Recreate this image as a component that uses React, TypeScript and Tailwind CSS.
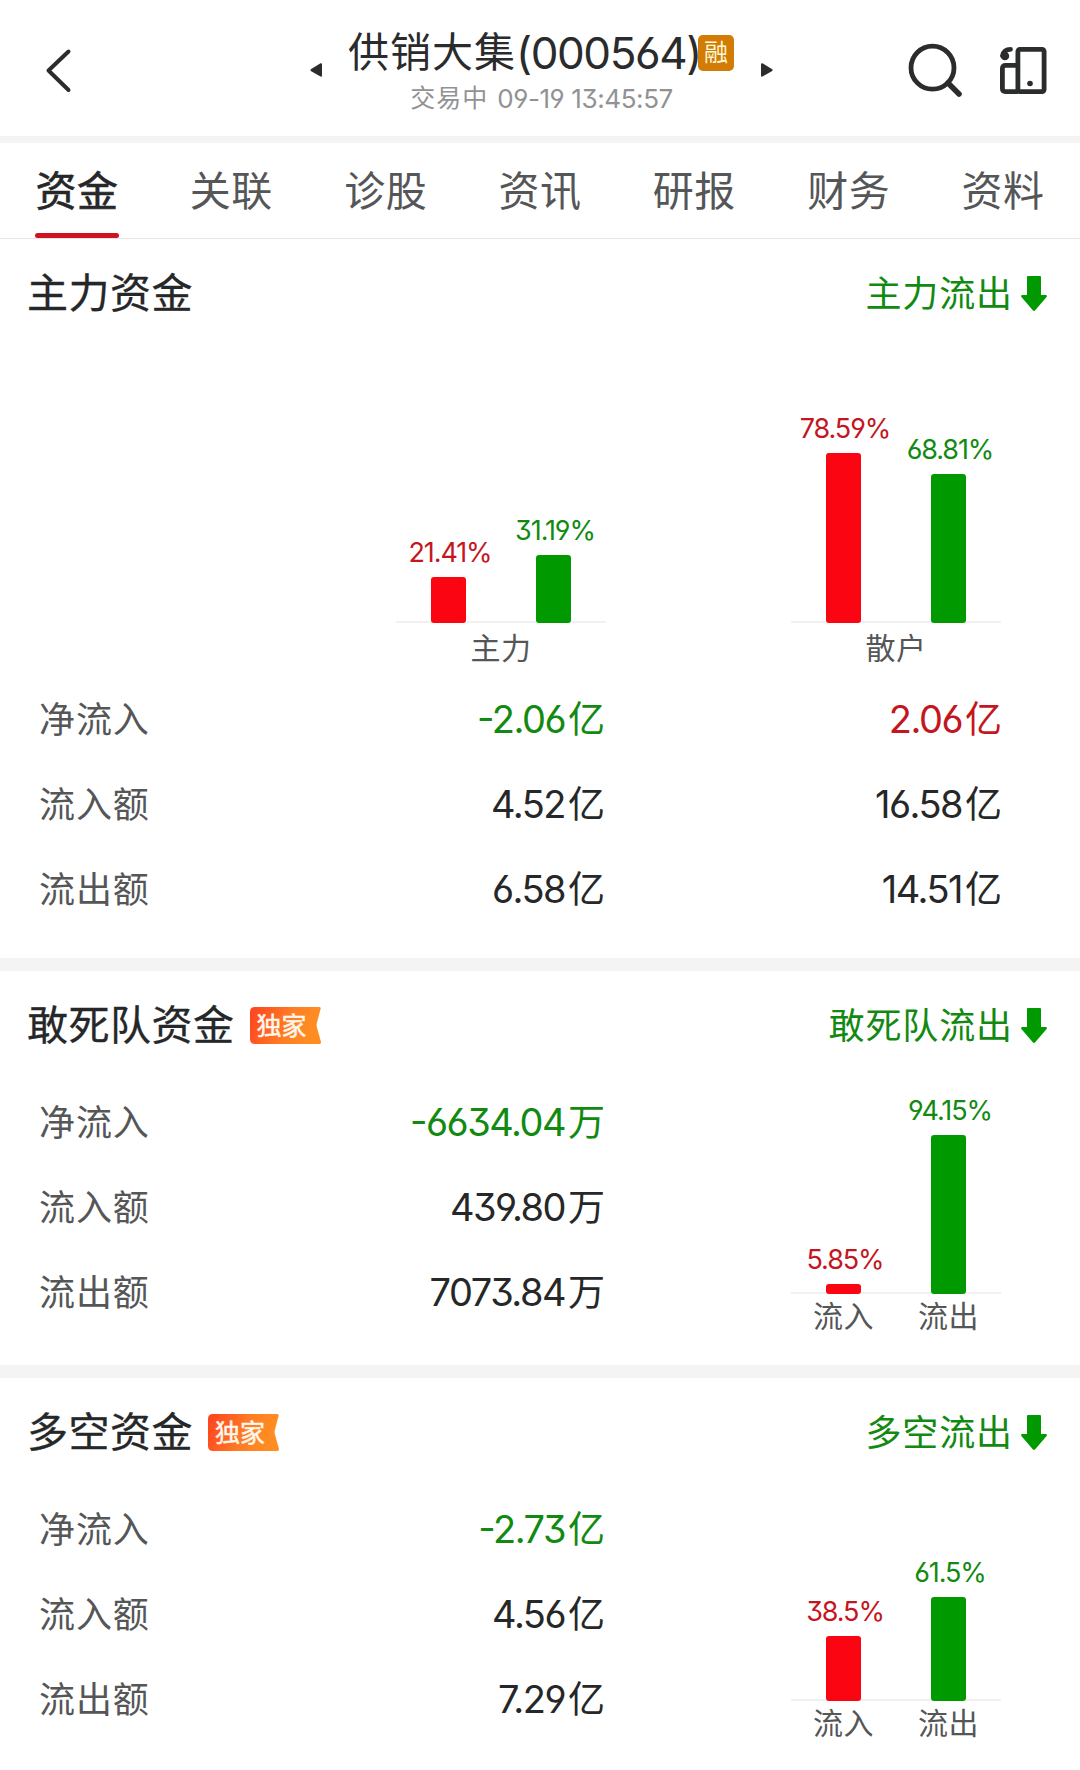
import React, { useState } from 'react';
import clsx from 'clsx';

type Tone = 'up' | 'down' | 'plain';

interface Bar {
  percent: string;
  height: number;
  tone: 'up' | 'down';
  label?: string;
}

interface Amount {
  value: string;
  unit: string;
  tone?: Tone;
}

interface FundRow {
  label: string;
  amounts: Amount[];
}

const tabs = ['资金', '关联', '诊股', '资讯', '研报', '财务', '资料'];

const mainRows: FundRow[] = [
  { label: '净流入', amounts: [{ value: '-2.06', unit: '亿', tone: 'down' }, { value: '2.06', unit: '亿', tone: 'up' }] },
  { label: '流入额', amounts: [{ value: '4.52', unit: '亿' }, { value: '16.58', unit: '亿' }] },
  { label: '流出额', amounts: [{ value: '6.58', unit: '亿' }, { value: '14.51', unit: '亿' }] },
];

const squadRows: FundRow[] = [
  { label: '净流入', amounts: [{ value: '-6634.04', unit: '万', tone: 'down' }] },
  { label: '流入额', amounts: [{ value: '439.80', unit: '万' }] },
  { label: '流出额', amounts: [{ value: '7073.84', unit: '万' }] },
];

const longShortRows: FundRow[] = [
  { label: '净流入', amounts: [{ value: '-2.73', unit: '亿', tone: 'down' }] },
  { label: '流入额', amounts: [{ value: '4.56', unit: '亿' }] },
  { label: '流出额', amounts: [{ value: '7.29', unit: '亿' }] },
];

const toneClass: Record<Tone, string> = {
  up: 'text-[#c4161f]',
  down: 'text-[#128a12]',
  plain: 'text-[#262728]',
};

const Header = () => (
  <header className="flex h-[136px] items-start justify-between">
    <svg className="ml-[40px] mt-[44px] h-[54px] w-[40px]" viewBox="0 0 40 54" fill="none" stroke="#2b2c2d" strokeWidth="4" strokeLinecap="round" strokeLinejoin="round">
      <path d="M28.5 7.5 8.5 26.5l20 19.5" />
    </svg>
    <div className="ml-[97px] flex items-start">
      <svg className="mr-[26px] mt-[63px] h-[14px] w-[12px]" viewBox="0 0 12 14" fill="#2b2c2d">
        <path d="M10.5.3Q12 0 12 1.5v11q0 1.5-1.5 1.1L.8 7.9Q0 7 .8 6.300z" />
      </svg>
      <div className="flex w-[387px] flex-col items-center">
        <div className="mt-[23px] flex h-[59px] w-full items-center whitespace-nowrap text-[#2a2b2c]">
          <span className="text-[41px] tracking-[1px]">供销大集</span>
          <span className="w-[182px] text-[44px] tracking-[-1.4px]">(000564)</span>
          <span className="flex h-9 w-9 shrink-0 items-center justify-center rounded-[5px] bg-[#d27b05] text-2xl leading-none text-[#fff8d4]">融</span>
        </div>
        <div className="flex h-8 items-center whitespace-nowrap text-[#919293]">
          <span className="mr-[9px] pt-[2px] text-[25px] tracking-[1px]">交易中</span>
          <span className="text-[26px] tracking-[-0.4px]">09-19 13:45:57</span>
        </div>
      </div>
      <svg className="ml-[26px] mt-[63px] h-[14px] w-[12px]" viewBox="0 0 12 14" fill="#2b2c2d">
        <path d="M1.5.3Q0 0 0 1.5v11q0 1.5 1.5 1.1L11.2 7.9Q12 7 11.2 6.300z" />
      </svg>
    </div>
    <div className="mr-[31px] mt-[42px] flex">
      <svg className="h-[58px] w-[58px]" viewBox="0 0 58 58" fill="none" stroke="#2b2c2d" strokeWidth="4.8" strokeLinecap="round">
        <circle cx="26.5" cy="25.7" r="21.5" />
        <path d="m42 41 11 11" strokeWidth="5.5" />
      </svg>
      <svg className="ml-[35px] h-[58px] w-[50px]" viewBox="0 0 50 58" fill="none" stroke="#2b2c2d" strokeWidth="4.8" strokeLinejoin="round">
        <rect x="18.9" y="7.4" width="26.2" height="42.2" rx="2" />
        <path d="M18.9 23.4H6.5q-3.1 0-3.1 3v20.2q0 3 3.1 3h12.4" />
        <path d="M11.5 7.3Q5 7.3 3.6 13.5" strokeLinecap="round" />
        <circle cx="5.9" cy="14" r="4.3" fill="#2b2c2d" stroke="none" />
        <circle cx="31" cy="41.5" r="2.8" fill="#2b2c2d" stroke="none" />
      </svg>
    </div>
  </header>
);

const DownArrow = () => (
  <svg className="ml-[8px] h-[35px] w-[26px]" viewBox="0 0 26 35" fill="#009a00">
    <path d="M7 0h12q1 0 1 1v18h5q1.5.5.6 1.9L14 34.5q-1 .9-2 0L.4 20.9Q-.5 19.5 1 19h5V1q0-1 1-1z" />
  </svg>
);

const ExclusiveBadge = () => (
  <span className="relative ml-[15px] flex h-[37px] w-[71px] items-center pl-[7px]">
    <svg className="absolute inset-0 h-full w-full" viewBox="0 0 71 37">
      <defs>
        <linearGradient id="badge" x1="0" y1="0.3" x2="1" y2="0.5">
          <stop offset="0" stopColor="#fd4720" />
          <stop offset="0.55" stopColor="#ff7d24" />
          <stop offset="1" stopColor="#ff9124" />
        </linearGradient>
      </defs>
      <path d="M5 0h64q2 0 1.5 2L67 15q-1 3 0 6l4 14q0 2-2 2H5q-5 0-5-5V5q0-5 5-5z" fill="url(#badge)" />
      <path d="M46 37 71 0l-4.5 18L71 37z" fill="#ff8a1f" opacity="0.35" />
    </svg>
    <span className="relative pt-[2px] text-[25px] leading-none whitespace-nowrap text-[#fff6ec] [-webkit-text-stroke:0.5px]">独家</span>
  </span>
);

interface SectionTitleProps {
  title: string;
  status: string;
  exclusive?: boolean;
}

const SectionTitle: React.FC<SectionTitleProps> = ({ title, status, exclusive }) => (
  <div className="flex h-[108px] items-center justify-between pr-[33px] pl-[27px]">
    <div className="flex items-center">
      <h2 className="pt-[2px] text-[41px] tracking-[0.5px] text-[#262728] [-webkit-text-stroke:0.3px]">{title}</h2>
      {exclusive && <ExclusiveBadge />}
    </div>
    <div className="flex items-center text-[36px] tracking-[0.9px] text-[#128a12]">
      <span className="pt-[2px]">{status}</span>
      <DownArrow />
    </div>
  </div>
);

const BarChart: React.FC<{ bars: Bar[]; caption?: string }> = ({ bars, caption }) => (
  <div className="flex w-[210px] flex-col">
    <div className="flex flex-1 items-end justify-around bg-[linear-gradient(#f1f1f1,#f1f1f1)] bg-[length:100%_2px] bg-bottom bg-no-repeat">
      {bars.map((bar) => (
        <div key={bar.percent} className="flex w-[105px] flex-col items-center">
          <span className={clsx('mb-[8px] pl-[3px] text-[27px] leading-8 tracking-[-1.1px] whitespace-nowrap', toneClass[bar.tone])}>
            {bar.percent}
          </span>
          <div
            className={clsx('w-[35px] rounded-[3px]', bar.tone === 'up' ? 'bg-[#fa0511]' : 'bg-[#009a00]')}
            style={{ height: bar.height }}
          />
        </div>
      ))}
    </div>
    {caption ? (
      <div className="h-[53px] text-center text-[30px] leading-[51px] tracking-[0.5px] text-[#555657]">{caption}</div>
    ) : (
      <div className="flex h-[44px] text-center text-[30px] leading-[44px] tracking-[0.5px] text-[#555657]">
        {bars.map((bar) => (
          <span key={bar.percent} className="flex-1">{bar.label}</span>
        ))}
      </div>
    )}
  </div>
);

const FundRows: React.FC<{ rows: FundRow[] }> = ({ rows }) => (
  <div>
    {rows.map((row) => (
      <div key={row.label} className="flex h-[85px] items-center pt-[2px] pl-[39px]">
        <span className="w-[169px] text-[36px] tracking-[0.9px] text-[#555657]">{row.label}</span>
        {row.amounts.map((amount) => (
          <span
            key={amount.value}
            className={clsx('flex w-[397px] items-center justify-end', toneClass[amount.tone ?? 'plain'])}
          >
            <span className="text-[38px] tracking-[-1.5px] [font-feature-settings:'cv03','cv04','cv09','case']">{amount.value}</span>
            <span className="ml-[3px] text-[37px]">{amount.unit}</span>
          </span>
        ))}
      </div>
    ))}
  </div>
);

interface SideChartSectionProps {
  title: string;
  status: string;
  rows: FundRow[];
  bars: Bar[];
}

const SideChartSection: React.FC<SideChartSectionProps> = ({ title, status, rows, bars }) => (
  <section>
    <SectionTitle title={title} status={status} exclusive />
    <div className="flex h-[286px]">
      <FundRows rows={rows} />
      <div className="ml-[186px] flex h-[259px]">
        <BarChart bars={bars} />
      </div>
    </div>
  </section>
);

const Divider = () => <div className="h-[13px] bg-[#f4f4f4]" />;

export default function App() {
  const [activeTab, setActiveTab] = useState('资金');

  return (
    <div className="h-[1770px] w-[1080px] overflow-hidden bg-white font-['Inter','Noto_Sans_CJK_SC',sans-serif] [font-feature-settings:'cv03','cv04','cv09']">
      <Header />
      <div className="h-[7px] bg-[#f4f4f4]" />

      {/* Tabs */}
      <nav className="flex h-[96px] justify-between border-b border-[#e5e5e5] px-[35px]">
        {tabs.map((tab) => (
          <button
            key={tab}
            onClick={() => setActiveTab(tab)}
            className={clsx(
              'flex w-[84px] flex-col items-center justify-between text-[41px] tracking-[0.5px] whitespace-nowrap',
              tab === activeTab ? 'text-[#262728] [-webkit-text-stroke:0.6px]' : 'text-[#555657]'
            )}
          >
            <span className="h-[90px] leading-[97px]">{tab}</span>
            {tab === activeTab && <span className="h-[5px] w-full rounded-full bg-[#cf1420]" />}
          </button>
        ))}
      </nav>

      <section className="h-[719px]">
        <SectionTitle title="主力资金" status="主力流出" />
        <div className="flex h-[329px] gap-[185px] pl-[396px]">
          <BarChart
            caption="主力"
            bars={[
              { percent: '21.41%', height: 46.5, tone: 'up' },
              { percent: '31.19%', height: 68, tone: 'down' },
            ]}
          />
          <BarChart
            caption="散户"
            bars={[
              { percent: '78.59%', height: 170.5, tone: 'up' },
              { percent: '68.81%', height: 149.5, tone: 'down' },
            ]}
          />
        </div>
        <FundRows rows={mainRows} />
      </section>
      <Divider />

      <SideChartSection
        title="敢死队资金"
        status="敢死队流出"
        rows={squadRows}
        bars={[
          { percent: '5.85%', height: 10, tone: 'up', label: '流入' },
          { percent: '94.15%', height: 159, tone: 'down', label: '流出' },
        ]}
      />
      <Divider />

      <SideChartSection
        title="多空资金"
        status="多空流出"
        rows={longShortRows}
        bars={[
          { percent: '38.5%', height: 65, tone: 'up', label: '流入' },
          { percent: '61.5%', height: 104, tone: 'down', label: '流出' },
        ]}
      />
    </div>
  );
}
